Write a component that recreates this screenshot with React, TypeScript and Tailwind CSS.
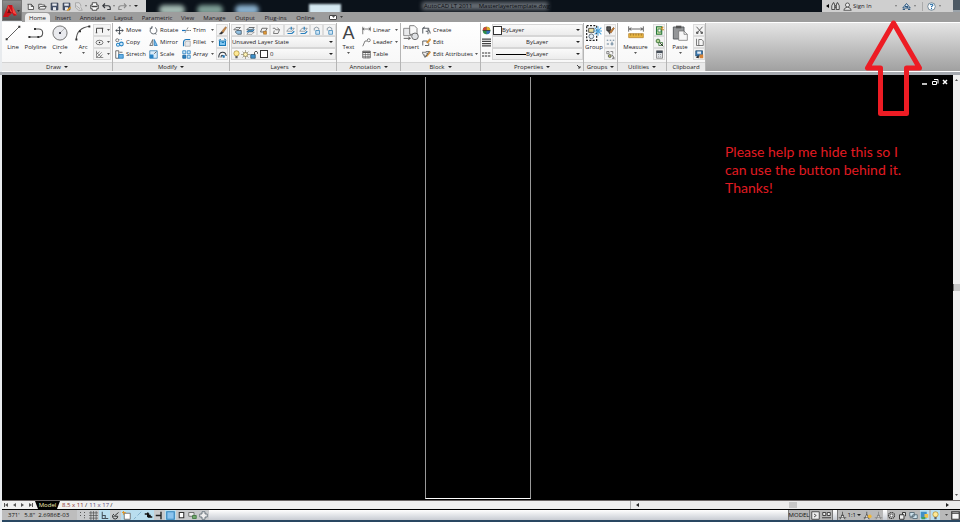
import type { ReactNode } from "react"

const icons: Record<string, ReactNode> = {
  // quick access toolbar
  new: <path d="M2 3h5l3 3v4H3V3M7 3v3h3" fill="#f4f4f4" stroke="#333" />,
  open: <path d="M1 9V3h4l1 1h3v2M1 9l2-3h8L9 9.5H1" fill="#eee" stroke="#333" />,
  save: <><path d="M1.5 1.5h9v9h-9z" fill="#46526b" stroke="#29344a" /><path d="M3 2h6v3H3zM4 7h4v4H4z" fill="#e8eaf0" /></>,
  saveAs: <><path d="M1.5 1.5h9v9h-9z" fill="#46526b" stroke="#29344a" /><path d="M3 2h6v3H3zM4 7h4v4H4z" fill="#e8eaf0" /><path d="M6 11l5-5 1 2-4 4z" fill="#e39c28" /></>,
  sheet: <path d="M2 1h5l2 3v2M2 1v6l4 4h5L9 7M3 5l5 4" fill="#ddd" stroke="#999" />,
  print: <><path d="M3 1h6v3h2v5H9v2H3V9H1V4h2z" fill="#fff" stroke="#222" /><path d="M2 5h8v2H2z" fill="#444" /></>,
  undo: <path d="M4 2L1 5l3 3M1 5h7q3 0 3 3v2H7" fill="none" stroke="#35383d" strokeWidth="1.5" />,
  redo: <path d="M8 2l3 3-3 3M11 5H4Q1 5 1 8v2h4" fill="none" stroke="#8b8b8b" strokeWidth="1.5" />,
  // draw
  line: <><path d="M1.5 10.5l9-9" stroke="#555" strokeWidth=".7" /><path d="M.5 10h1.5v1.5H.5zM10 .5h1.5V2H10z" fill="#333" /></>,
  polyline: <><path d="M1 9h7c4 0 4-6 0-6H5" fill="none" stroke="#555" strokeWidth=".8" /><path d="M.3 8.2h1.5v1.5H.3zM7 8.2h1.5v1.5H7zM4.5 2.2H6v1.5H4.5z" fill="#333" /></>,
  circle: <><circle cx="6" cy="6" r="5.3" fill="#e9eaee" stroke="#555" strokeWidth=".6" /><path d="M6 6l4-4" stroke="#999" strokeWidth=".5" /><circle cx="6" cy="6" r=".8" fill="#223" /></>,
  arc: <><path d="M1 11c0-5 3-9 10-10" fill="none" stroke="#555" strokeWidth=".8" /><path d="M.3 10.2h1.5v1.5H.3zM10 .3h1.5v1.5H10zM3 4h1.5v1.5H3z" fill="#333" /></>,
  rect: <path d="M2 9V3h8v6M1 9h2M9 3h2" fill="none" stroke="#444" strokeWidth="1.3" />,
  ellipse: <><ellipse cx="6" cy="6" rx="4.7" ry="3" fill="#f4f4f4" stroke="#555" /><circle cx="6" cy="6" r="1" fill="#222" /></>,
  hatch: <path d="M2 1v9h9M2 10l7-7M2 6l4-4M6 10l4-4M2 3l7 7" fill="none" stroke="#555" strokeWidth=".8" />,
  // modify
  move: <path d="M6 1v10M1 6h10M4.5 3L6 1l1.500 2M4.500 9L6 11l1.500-2M3 4.500L1 6l2 1.500M9 4.500L11 6 9 7.500" fill="none" stroke="#424951" strokeWidth="1.2" />,
  rotate: <path d="M8 2a4.500 4.500 0 1 1-4 0M4 0v3H1M8 10l2 1" fill="none" stroke="#555c64" strokeWidth="1.2" />,
  trim: <><path d="M0 6h5" stroke="#1b74bf" strokeWidth="1.6" /><path d="M4 9l4-7M7 6h5" stroke="#444" strokeDasharray="2 1" /></>,
  copy: <><circle cx="3" cy="3" r="2" fill="none" stroke="#555" /><circle cx="4" cy="9" r="2" fill="none" stroke="#2583c4" strokeWidth="1.4" /><circle cx="8.500" cy="8" r="2.500" fill="#d2e9fa" stroke="#2583c4" strokeWidth="1.4" /><path d="M6 2h4" stroke="#2583c4" strokeDasharray="1 1" /></>,
  mirror: <><path d="M5 2v8H1z" fill="#eee" stroke="#555" /><path d="M7 2v8h4z" fill="#7fc0ee" stroke="#1f77b8" /></>,
  fillet: <><path d="M2 11V6q0-4 4-4h5" fill="none" stroke="#1f77b8" strokeWidth="1.5" /><path d="M4 11V7q0-3 3-3h4v7z" fill="#e6e8eb" stroke="#777" strokeWidth=".6" /></>,
  stretch: <><path d="M1 1h4v10H1z" fill="#fff" stroke="#444" /><path d="M5 6h6v5H5z" fill="#67b1e6" stroke="#1f77b8" /><path d="M6 3h4" stroke="#444" /></>,
  scale: <><path d="M1 1h10v10H1z" fill="#d9ecf9" stroke="#2c7ab1" /><path d="M1 6h5v5H1z" fill="#2984c6" /><path d="M7 5l3-3" stroke="#444" /></>,
  array: <><path d="M1 1h4v4H1zM7 1h4v4H7zM7 7h4v4H7z" fill="#cfe7f8" stroke="#1f7bc0" /><path d="M1 7h4v4H1z" fill="#2984c6" stroke="#155a91" /></>,
  erase: <><path d="M5 7l5-6 1.500 1L7 9z" fill="#c98944" stroke="#80502a" strokeWidth=".6" /><path d="M1 11l4-4 2 2-2 2z" fill="#333" /></>,
  explode: <><path d="M2 4h8v6H2z" fill="#85c8f1" stroke="#177ab9" strokeWidth="1.4" /><path d="M1 3l3-1M8 1l3 2M5 6h3" stroke="#177ab9" strokeWidth="1.300" /></>,
  offset: <><path d="M1 10C1 1 10 1 11 8M4 10c0-4 3-4 4 0" fill="none" stroke="#30363c" strokeWidth="1.4" /><path d="M6 7h3v3H6z" fill="#1f7bc0" /></>,
  // layers
  layerProps: <><path d="M1 5l3-3h6L7 5z" fill="#e7edf2" stroke="#555" /><path d="M3 8l2-2h6v5H6z" fill="#91bfe0" stroke="#3c4d5b" /></>,
  layerBlue: <><path d="M1 8l3-3h7L8 8z" fill="#59a7dd" stroke="#195e93" /><path d="M1 5l3-3h7L8 5z" fill="#d5ebf8" stroke="#444" /><path d="M1 11l3-3h7l-3 3z" fill="#fff" stroke="#555" strokeWidth=".7" /></>,
  layerGold: <><path d="M2 8l2-5h7L8 8z" fill="#eee" stroke="#444" /><path d="M6 7h4v4H6z" fill="#df9735" stroke="#855014" strokeWidth=".6" /></>,
  layerGray: <path d="M1 3h3l1 2h5M3 6l-1 4h6l2-5M7 2l3 3" fill="#f2f2f2" stroke="#555" />,
  layerOff: <><path d="M1 7l3-4h7L8 7z" fill="#eef2f4" stroke="#66717b" strokeWidth=".8" /><path d="M2 10h6l3-3M7 1v4" stroke="#287fbd" strokeWidth="1.600" fill="none" /></>,
  lockBlue: <><path d="M3 6V3q3-3 6 0v2" fill="none" stroke="#697987" /><path d="M5 6h5v5H5z" fill="#cfe5f5" stroke="#3584b8" /></>,
  bulb: <><circle cx="6" cy="4.500" r="3.500" fill="#ffe995" stroke="#9a7c20" strokeWidth=".8" /><path d="M4.500 8h3v3h-3z" fill="#606060" /></>,
  sun: <><path d="M6 0v12M0 6h12M2 2l8 8M10 2l-8 8" stroke="#7c765a" strokeWidth=".8" /><circle cx="6" cy="6" r="2.700" fill="#fff4b5" stroke="#88784b" /></>,
  unlock: <><path d="M1 6h6v5H1z" fill="#3d90cb" stroke="#29536f" /><path d="M6 6V3q2-3 4 0v2" fill="none" stroke="#444" strokeWidth="1.2" /></>,
  // annotation and block
  linear: <path d="M1 1v10M11 1v6M1 4h10M3 2.500L1 4l2 1.500M9 2.500L11 4 9 5.500" fill="none" stroke="#555" />,
  leader: <><path d="M1 11l3-7h3" fill="none" stroke="#555" /><circle cx="9" cy="3" r="2" fill="#fff" stroke="#555" /></>,
  table: <><path d="M1 1.500h10v9H1z" fill="#fff" stroke="#444" /><path d="M1 2h10v2H1z" fill="#555" /><path d="M1 6h10M1 8.500h10M4.500 3v8M8 3v8" stroke="#555" strokeWidth=".8" /></>,
  insert: <><path d="M.5 2.500h5.500v5.500H.5z" fill="#e9eaec" stroke="#777" strokeWidth=".6" /><path d="M5 .5h3.500l2 2V7H5z" fill="#f9f9f9" stroke="#666" strokeWidth=".6" /><circle cx="9" cy="8.500" r="2.500" fill="#dfe1e4" stroke="#666" strokeWidth=".7" /><path d="M.5 10h5M4 9l1.500 1L4 11" fill="none" stroke="#555" strokeWidth=".7" /></>,
  create: <path d="M1 10V3h8v3M1 3l3-2M5 7h3v4M7 5q4 0 4 5" fill="none" stroke="#454b51" strokeWidth="1.2" />,
  edit: <><path d="M1 10V4h6v2M4 10h5V7" fill="none" stroke="#555" strokeWidth="1.2" /><path d="M6 6l4-5 2 1-4 5z" fill="#e9a138" stroke="#a56113" strokeWidth=".5" /></>,
  attributes: <><path d="M0 3h5l3 3-4 4zM5 2h6" fill="#eee" stroke="#555" /><path d="M5 8l5-6 2 1-5 6z" fill="#da973e" /><path d="M3 6l2 3 4-7" fill="none" stroke="#414850" /></>,
  // properties
  wheel: <><circle cx="6" cy="6" r="5" fill="#2f8e4a" /><path d="M6 6V1a5 5 0 0 1 5 5z" fill="#e3ad29" /><path d="M6 6h5a5 5 0 0 1-5 5z" fill="#356ebb" /><path d="M6 6H1a5 5 0 0 1 5-5z" fill="#d24735" /><path d="M1 6h10" stroke="#333" /></>,
  weights: <path d="M0 1.500h12M0 4.500h12M0 7.500h12M0 10.500h12" stroke="#444" strokeWidth="1.6" />,
  types: <path d="M0 4h12M0 8h12" stroke="#333" strokeWidth="1.400" strokeDasharray="3 1" />,
  group: <><path d="M.5 .5h7.500v11H.5z" fill="none" stroke="#222" strokeWidth=".9" strokeDasharray="1.500 1" /><path d="M2 2.500h4v3H2z" fill="#e9dda0" stroke="#333" strokeWidth=".6" /><circle cx="4" cy="8.500" r="1.800" fill="#e5edf3" stroke="#456" strokeWidth=".6" /><path d="M9 1v7M5.500 4.500h6.500M6.500 2l5 5M11.500 2l-5 5" stroke="#4da4dc" strokeWidth=".8" /></>,
  ungroup: <><path d="M1 1h5v5H1zM2 7h3v4" fill="#555" stroke="#222" /><path d="M5 8l5-6 1 1-4 6z" fill="#d59035" stroke="#8c4f22" /></>,
  groupEdit: <path d="M1 3h2M5 3h2M9 3h2M1 8h3M6 8h4M8 5v5" stroke="#647f96" strokeWidth="1.3" />,
  groupPick: <><path d="M1 2h3v3H1zM6 2h3v3" fill="none" stroke="#666" /><circle cx="5" cy="8" r="2" fill="#b3ba68" stroke="#555" /><path d="M8 6l3 5M8 11h3" stroke="#444" /></>,
  measure: <><path d="M.5 1v4M11.500 1v4M1 3h10M2.500 2L1 3l1.500 1M9.500 2L11 3 9.500 4" fill="none" stroke="#444" strokeWidth=".6" /><path d="M.5 6.500h11v3H.5z" fill="#e8b644" stroke="#ad791e" strokeWidth=".5" /><path d="M2 6.500v1.500M4 6.500v1.500M6 6.500v1.500M8 6.500v1.500M10 6.500v1.500" stroke="#745018" strokeWidth=".4" /></>,
  quickSelect: <><path d="M2 1h7v10H2z" fill="#c4dc9e" stroke="#24763b" strokeWidth="1.400" /><path d="M4 4h4v4H4z" fill="#fff" stroke="#27753b" /><path d="M8 4l3-3M9 5h3" stroke="#d58b20" strokeWidth="1.500" /></>,
  quickCalc: <><circle cx="4" cy="4" r="2.500" fill="#b2d391" stroke="#386f34" strokeWidth="1.2" /><path d="M5 6h5v4H5z" fill="#eaf0e5" stroke="#356d34" /><path d="M7 7l4 4" stroke="#222" strokeWidth="1.300" /></>,
  calc: <><path d="M2 1h8v10H2z" fill="#dfe2e6" stroke="#777" /><path d="M2 1h8v3H2z" fill="#454f59" /><path d="M4 6h1M7 6h1M4 9h1M7 9h1" stroke="#777" /></>,
  paste: <><path d="M1 1.500h8v9H1z" fill="#949698" stroke="#55585c" strokeWidth=".7" /><path d="M3 .5h4v2H3z" fill="#555" /><path d="M5 4.500h4l2.500 2.500v4.500H5z" fill="#f7f7f7" stroke="#666" strokeWidth=".5" /><path d="M9 4.500V7h2.500" fill="none" stroke="#666" strokeWidth=".5" /></>,
  cut: <path d="M2 1l7 8M10 1L3 9M2 8h2v2H2zM8 8h2v2H8z" fill="none" stroke="#555" strokeWidth="1.200" />,
  clip: <path d="M2 1v9h4M5 2h4l2 2v6H5z" fill="#f5f5f5" stroke="#555" />,
  match: <><path d="M1 1h9v7H1z" fill="#3c7cb5" stroke="#274e6d" /><path d="M3 2h5v3H3z" fill="#e8eef4" /><path d="M6 6h5v5H6z" fill="#d58235" /><path d="M1 10l4-3v4z" fill="#222" /></>,
  // info center
  binoculars: <path d="M3 1h1l1 4v5H1V5zM8 1h1l2 4v5H7V5zM5 5h2M5 7h2" fill="#ddd" stroke="#222" />,
  person: <><circle cx="6" cy="4" r="2.700" fill="#eee" stroke="#333" /><path d="M1 11q1-4 5-4t5 4z" fill="#e9e9e9" stroke="#333" /></>,
  exchange: <><path d="M1 8l5-6 5 6z" fill="#dce8f4" stroke="#29547c" strokeWidth="1.300" /><path d="M1 10h3M8 10h3M4 6h4M4 5l4 3" stroke="#29547c" strokeWidth="1.300" /></>,
  help: <><circle cx="6" cy="6" r="5" fill="#fff" stroke="#526d83" /><path d="M4 4q2-2 4 0 0 1-2 2v1M6 8v1.500" fill="none" stroke="#2269a4" strokeWidth="1.400" /></>,
  // status bar
  snap: <path d="M3 2h1M8 2h1M3 6h1M8 6h1M8 9h1" stroke="#333" strokeWidth="1.500" />,
  grid: <path d="M0 2.500h12M0 6h12M0 9.500h12M2.500 0v12M6 0v12M9.500 0v12" stroke="#444" strokeWidth=".8" />,
  ortho: <path d="M3 1v9h8M3 6h4v4" fill="none" stroke="#45515b" strokeWidth="1.400" />,
  polar: <path d="M3 8l7-6M4 4a3.500 3.500 0 1 0 5 3M5 7h4" fill="none" stroke="#333" strokeWidth="1.300" />,
  osnap: <><path d="M3 3h8v8H3z" fill="#fff" stroke="#555" /><path d="M0 2h5M2 0v5" stroke="#df9a30" strokeWidth="1.400" /></>,
  otrack: <path d="M1 11l3-3M6 6l5-5" stroke="#76a6c3" />,
  ducs: <path d="M1 4h5v4h5M4 6h5M5 2v6" fill="none" stroke="#111" strokeWidth="2" />,
  dyn: <path d="M1 6h7M8 1v10" stroke="#222" strokeWidth="1.800" />,
  weight: <path d="M1 1h10v10H1z" fill="#8bc4ef" stroke="#3284bd" strokeWidth="1.500" />,
  paper: <path d="M3 2h6v7H3z" fill="#fff" stroke="#333" strokeWidth="1.400" />,
  props: <><path d="M1 2h7v5H1z" fill="#eee" stroke="#555" /><path d="M6 6h5v4H6z" fill="#72a86d" stroke="#366f35" /></>,
  cycle: <path d="M4 1h4v3h3v4H8v3H4V8H1V4h3z" fill="#eee" stroke="#53606b" />,
  model: <path d="M1 1h10v10H1zM4 4l3 2-3 2" fill="#eee" stroke="#444" strokeWidth="1.200" />,
  views: <path d="M1 2h4v4H1zM7 2h4v4H7zM0 9h12" fill="#eee" stroke="#333" strokeWidth="1.200" />,
  scaleMan: <path d="M6 1v3M3 11l3-7 3 7M1 9h10M4 6h4" fill="#eee" stroke="#444" />,
  scaleGold: <><path d="M5 1v3M2 11l3-7 3 7M1 9h8" fill="#eee" stroke="#444" /><circle cx="9" cy="7" r="2.500" fill="#f2b735" /></>,
  gear: <><circle cx="6" cy="6" r="4" fill="#ddd" stroke="#333" strokeWidth="1.500" strokeDasharray="2 .7" /><circle cx="6" cy="6" r="2" fill="#fff" stroke="#333" /></>,
  lock: <path d="M2 5h6v6H2zM6 5V2h4v5" fill="#eee" stroke="#333" strokeWidth="1.300" />,
  hardware: <path d="M1 2h6v5H1zM5 5h6v5H5zM1 9h3" fill="#cfe3ed" stroke="#465b69" />,
  isolate: <><path d="M1 1h8v9H1z" fill="#3f8fc5" /><path d="M6 4h5v5H6z" fill="#f2c449" /><path d="M2 8h5v3H2z" fill="#40a060" /></>,
  clean: <path d="M1 1h10v10H1zM1 3h10" fill="#f7f7f7" stroke="#333" strokeWidth="1.500" />,
}

function Icon({ name, className = "size-[9px]" }: { name: string; className?: string }) {
  return (
    <svg viewBox="0 0 12 12" className={`shrink-0 ${className}`} aria-hidden="true">
      {icons[name]}
    </svg>
  )
}

function Caret({ className = "w-[3px]" }: { className?: string }) {
  return (
    <svg viewBox="0 0 4 2" className={`h-[2px] shrink-0 ${className}`} aria-hidden="true">
      <path d="M0 0h4L2 2z" fill="#222" />
    </svg>
  )
}

function Panel({ title, className, caret = true, launcher = false, children }: { title: string; className: string; caret?: boolean; launcher?: boolean; children: ReactNode }) {
  return (
    <section className={`shrink-0 flex flex-col border-r border-[#b5b5b5] ${className}`}>
      <div className="h-[39px] flex pt-px bg-gradient-to-b from-white to-[#f8f8f8]">{children}</div>
      <h2 className="relative h-[9px] flex items-center justify-center gap-[3px] bg-[#eaeaea] border-t border-[#d4d4d4] text-[#222]">
        {title}
        {caret && <Caret className="w-[4px]" />}
        {launcher && (
          <svg viewBox="0 0 4 4" className="absolute right-[2px] size-[4px]" aria-hidden="true">
            <path d="M0 0l3 3M3 1v2H1" fill="none" stroke="#444" />
          </svg>
        )}
      </h2>
    </section>
  )
}

function BigTool({ icon, label, caret, className }: { icon: string; label: string; caret?: boolean; className: string }) {
  return (
    <button className={`shrink-0 flex flex-col items-center ${className}`}>
      {icon === "text" ? (
        <span className="h-[18px] font-['Liberation_Sans',sans-serif] text-[18px] leading-[18px] text-[#3f4347]">A</span>
      ) : (
        <span className="h-[18px] flex items-center"><Icon name={icon} className="size-[16px]" /></span>
      )}
      <span className="mt-px leading-[8px]">{label}</span>
      {caret && <Caret className="mt-px w-[3px]" />}
    </button>
  )
}

function Tools({ items, className }: { items: [string, string, boolean?][]; className: string }) {
  return (
    <div className={`shrink-0 flex flex-col ${className}`}>
      {items.map(([icon, label, caret]) => (
        <button key={label} className="h-3 flex items-center gap-[2px] whitespace-nowrap">
          <Icon name={icon} />
          {label}
          {caret && <Caret className="ml-auto mr-px w-[3px]" />}
        </button>
      ))}
    </div>
  )
}

function IconStack({ items, caret, className }: { items: string[]; caret?: boolean; className: string }) {
  return (
    <div className={`shrink-0 flex flex-col ${className}`}>
      {items.map((icon) => (
        <button key={icon} aria-label={icon} className="h-3 flex items-center justify-center gap-[3px] bg-[#f4f4f4] border border-[#dcdcdc]">
          <Icon name={icon} />
          {caret && <Caret />}
        </button>
      ))}
    </div>
  )
}

function Dropdown({ label, value, className = "", children }: { label: string; value: string; className?: string; children?: ReactNode }) {
  return (
    <label className="h-3 min-w-0 flex-1 flex items-center pr-[2px] bg-gradient-to-b from-[#fafafa] to-[#ececec] border border-[#d6d6d6]">
      {children}
      <select aria-label={label} className={`min-w-0 flex-1 h-[10px] appearance-none outline-none leading-[10px] ${className}`}>
        <option>{value}</option>
      </select>
      <Caret className="w-[4px]" />
    </label>
  )
}

const quickAccess = ["new", "open", "save", "saveAs", "sheet", "print", "undo", "redo"]
const ribbonTabs = [
  ["Home", "w-[25px]"],
  ["Insert", "w-[26px]"],
  ["Annotate", "w-[33px]"],
  ["Layout", "w-[29px]"],
  ["Parametric", "w-[38px]"],
  ["View", "w-[23px]"],
  ["Manage", "w-[31px]"],
  ["Output", "w-[30px]"],
  ["Plug-ins", "w-[31px]"],
  ["Online", "w-[29px]"],
]
const layerTools = ["layerProps", "layerBlue", "layerGold", "layerGray", "layerOff", "layerOff", "lockBlue", "lockBlue"]
const toggles: [string, boolean][] = [
  ["snap", false], ["grid", false], ["ortho", true], ["polar", false], ["osnap", true], ["otrack", true],
  ["ducs", true], ["dyn", false], ["weight", true], ["paper", false], ["props", false], ["cycle", false],
]

function TitleBar() {
  return (
    <div className="h-3 flex bg-[#0b121a]">
      <div className="w-[124px] shrink-0 flex items-center pl-1 gap-[3px] bg-[#d3d3d3]">
        {quickAccess.map((name) => (
          <button key={name} aria-label={name} className="flex items-center gap-[2px]">
            <Icon name={name} />
            {["sheet", "undo", "redo"].includes(name) && <Caret className="w-[2px]" />}
          </button>
        ))}
        <Caret className="w-[4px]" />
      </div>
      <div className="relative flex-1 min-w-0 overflow-hidden">
        <div className="absolute left-[13px] top-[5px] w-[26px] h-[10px] rounded-full bg-[#a2b8b1] blur-[2px]" />
        <div className="absolute left-[51px] top-[5px] w-[26px] h-[10px] rounded-full bg-[#7d9d95] blur-[2px]" />
        <div className="absolute left-[89px] top-[5px] w-[24px] h-[10px] rounded-full bg-[#88aecb] blur-[2px]" />
        <div className="absolute left-[163px] top-[4px] w-[32px] h-[12px] bg-[#d5e8f1] blur-[1px]" />
        <div className="absolute left-[276px] top-[2px] w-[126px] h-[8px] bg-[#666c73] blur-[2px]" />
        <span className="absolute left-[278px] top-[2px] text-[#080b0f] whitespace-pre">AutoCAD LT 2011    Masterlayertemplate.dwg</span>
      </div>
      <div className="w-[131px] shrink-0 flex items-center bg-[#cfcfcf] pl-1">
        <button aria-label="Collapse" className="w-[5px]">
          <svg viewBox="0 0 3 4" className="w-[3px] h-[4px]" aria-hidden="true"><path d="M3 0v4L0 2z" /></svg>
        </button>
        <button aria-label="Search" className="w-3 flex"><Icon name="binoculars" /></button>
        <button className="w-[54px] flex items-center gap-px"><Icon name="person" />Sign In<Caret className="ml-auto w-[2px]" /></button>
        <button className="w-[20px] ml-[5px] flex items-center gap-[3px]" aria-label="Exchange"><Icon name="exchange" /><Caret className="w-[2px]" /></button>
        <button className="h-[9px] pl-1 flex items-center gap-[3px] border-l border-[#aaa]" aria-label="Help"><Icon name="help" /><Caret className="w-[2px]" /></button>
      </div>
      <div className="w-[7px] shrink-0 bg-[#4d5964] border-b-2 border-[#9ba3aa]" />
    </div>
  )
}

function Ribbon() {
  return (
    <div className="shrink-0 h-[50px] ml-[2px] flex border-y border-white bg-gradient-to-b from-[#e5e5e5] to-[#a0a0a0]">
      <Panel title="Draw" className="w-[111px]">
        <BigTool icon="line" label="Line" className="w-[22px]" />
        <BigTool icon="polyline" label="Polyline" className="w-[23px]" />
        <BigTool icon="circle" label="Circle" caret className="w-[26px]" />
        <BigTool icon="arc" label="Arc" caret className="w-[20px]" />
        <IconStack items={["rect", "ellipse", "hatch"]} caret className="w-[18px]" />
      </Panel>
      <Panel title="Modify" className="w-[117px]">
        <Tools className="w-[34px] ml-[2px]" items={[["move", "Move"], ["copy", "Copy"], ["stretch", "Stretch"]]} />
        <Tools className="w-[33px]" items={[["rotate", "Rotate"], ["mirror", "Mirror"], ["scale", "Scale"]]} />
        <Tools className="w-[33px]" items={[["trim", "Trim", true], ["fillet", "Fillet", true], ["array", "Array", true]]} />
        <IconStack items={["erase", "explode", "offset"]} className="w-3 ml-px" />
      </Panel>
      <Panel title="Layers" className="w-[107px]">
        <div className="flex-1 min-w-0 flex flex-col pl-px">
          <div className="h-3 flex">
            {layerTools.map((name, index) => (
              <button key={index} aria-label={name} className="flex-1 flex items-center justify-center bg-[#f4f4f4] border border-[#dcdcdc]"><Icon name={name} /></button>
            ))}
          </div>
          <div className="h-3 flex"><Dropdown label="Layer state" value="Unsaved Layer State" /></div>
          <div className="h-3 flex">
            <Dropdown label="Layer" value="0" className="pl-[2px]">
              <Icon name="bulb" /><Icon name="sun" /><Icon name="unlock" />
              <span className="ml-px size-[8px] bg-white border border-[#333]" />
            </Dropdown>
          </div>
        </div>
      </Panel>
      <Panel title="Annotation" className="w-[64px]">
        <BigTool icon="text" label="Text" caret className="w-[23px]" />
        <Tools className="w-[37px] ml-[2px]" items={[["linear", "Linear", true], ["leader", "Leader", true], ["table", "Table"]]} />
      </Panel>
      <Panel title="Block" className="w-[80px]">
        <BigTool icon="insert" label="Insert" className="w-[20px]" />
        <Tools className="w-[57px] ml-px" items={[["create", "Create"], ["edit", "Edit"], ["attributes", "Edit Attributes", true]]} />
      </Panel>
      <Panel title="Properties" launcher className="w-[103px]">
        <div className="flex-1 flex flex-col pl-px">
          <div className="flex items-center gap-px"><Icon name="wheel" />
            <Dropdown label="Object color" value="ByLayer"><span className="size-[9px] bg-white border border-[#333]" /></Dropdown>
          </div>
          <div className="flex items-center gap-px"><Icon name="weights" /><Dropdown label="Lineweight" value="ByLayer" className="pl-[33px]" /></div>
          <div className="flex items-center gap-px"><Icon name="types" />
            <Dropdown label="Linetype" value="ByLayer"><span className="ml-[3px] w-[30px] h-px bg-black" /></Dropdown>
          </div>
        </div>
      </Panel>
      <Panel title="Groups" className="w-[34px]">
        <BigTool icon="group" label="Group" className="w-[20px]" />
        <IconStack items={["ungroup", "groupEdit", "groupPick"]} className="w-3" />
      </Panel>
      <Panel title="Utilities" className="w-[49px]">
        <BigTool icon="measure" label="Measure" caret className="w-[35px]" />
        <IconStack items={["quickSelect", "quickCalc", "calc"]} className="w-3" />
      </Panel>
      <Panel title="Clipboard" caret={false} className="w-[39px]">
        <BigTool icon="paste" label="Paste" caret className="w-[26px]" />
        <IconStack items={["cut", "clip", "match"]} className="w-3" />
      </Panel>
    </div>
  )
}

function StatusBar() {
  return (
    <footer className="shrink-0 h-3 ml-[2px] flex items-center border-b-2 border-[#294762] bg-gradient-to-b from-white to-[#c8ccd3] text-[#111]">
      <div className="w-[75px] h-full pl-[6px] flex items-center bg-[#bdbdbd] whitespace-pre">371'   5.8"  2.6986E-03</div>
      {toggles.map(([name, on]) => (
        <button key={name} aria-label={name} aria-pressed={on} className={`w-[11px] h-full flex items-center justify-center ${on ? "bg-[#b9deef]" : "bg-[#c8cacc]"}`}>
          <Icon name={name} />
        </button>
      ))}
      <div className="ml-auto h-full flex items-center bg-[#b5b5b5] border-x border-[#777]">
        <button className="w-[21px] h-full border-r border-[#777]">MODEL</button>
        <button aria-label="Layout view" className="w-[11px] flex justify-center"><Icon name="model" /></button>
        <button aria-label="Quick views" className="w-[11px] flex justify-center"><Icon name="views" /></button>
      </div>
      <div className="ml-[4px] h-full flex items-center gap-[2px] bg-[#b9b9b9] border-l border-[#777]">
        <button className="flex items-center gap-px"><Icon name="scaleMan" />1:1<Caret className="w-[4px]" /></button>
        <button aria-label="Annotation visibility"><Icon name="scaleGold" /></button>
        <button aria-label="Auto scale" className="opacity-50"><Icon name="scaleMan" /></button>
      </div>
      <div className="ml-[4px] h-full flex items-center gap-[2px] bg-[#b9b9b9]">
        {["gear", "lock", "hardware", "isolate", "bulb"].map((name) => (
          <button key={name} aria-label={name} className={`h-full ${name === "isolate" || name === "bulb" ? "bg-[#b9deef]" : ""}`}><Icon name={name} /></button>
        ))}
        <Caret className="ml-[3px] mr-px w-[3px]" />
        <button aria-label="Clean screen"><Icon name="clean" /></button>
      </div>
    </footer>
  )
}

export default function App() {
  return (
    <div className="relative h-screen min-h-64 flex flex-col overflow-hidden bg-[#e8ebee] font-['Open_Sans',sans-serif] text-[6px] leading-[8px] text-[#1d1a24]">
      <header className="shrink-0 flex">
        <button aria-label="Application menu" className="w-[20px] h-[21px] ml-[2px] shrink-0 flex items-center justify-between pr-px bg-gradient-to-b from-[#8c8c8c] to-[#555] border border-[#777]">
          <svg viewBox="0 0 14 14" className="size-[14px]" aria-hidden="true">
            <path d="M0 13L5 1h4l5 10-3 1-2-3-4 4z" fill="#c91119" />
            <path d="M5 1l4 7-5 1zM9 1l5 10-4-2z" fill="#f34a42" />
            <path d="M6 4l2 5H4z" fill="#74070d" />
          </svg>
          <Caret />
        </button>
        <div className="flex-1 min-w-0">
          <TitleBar />
          <nav className="h-[10px] pl-[3px] flex items-center bg-[#9d9d9d]">
            {ribbonTabs.map(([name, width], index) => (
              <button key={name} className={`h-[9px] mt-px text-center ${width} ${index === 0 ? "bg-[#eeeeee] rounded-t-sm" : ""}`}>
                {name}
              </button>
            ))}
            <button aria-label="Minimize ribbon" className="ml-[9px] flex items-center gap-[3px]">
              <span className="w-[8px] h-[5px] flex items-center justify-center rounded-[1px] bg-white border border-[#444]"><Caret /></span>
              <Caret />
            </button>
          </nav>
        </div>
      </header>
      <Ribbon />
      <div className="shrink-0 h-[3px] bg-[#a6aab0]" />

      <main className="flex-1 min-h-0 flex ml-[2px]">
        <div className="relative flex-1 bg-black">
          {/* model geometry */}
          <div className="absolute left-[423px] top-[2px] bottom-px w-[106px] border-x border-b border-x-[#999] border-b-white" />
          <div className="absolute right-[4px] top-[3px] flex gap-[2px] text-white">
            <button aria-label="Minimize"><svg viewBox="0 0 8 8" className="size-[8px]"><path d="M1 6h5" stroke="currentColor" strokeWidth="1.500" /></svg></button>
            <button aria-label="Restore"><svg viewBox="0 0 8 8" className="size-[8px]"><path d="M1.500 3.500h4v3h-4zM3 1.500h4v4" fill="none" stroke="currentColor" /></svg></button>
            <button aria-label="Close"><svg viewBox="0 0 8 8" className="size-[8px]"><path d="M2 2l4 4M6 2L2 6" stroke="currentColor" strokeWidth="1.500" /></svg></button>
          </div>
          <p className="absolute right-[43px] top-[68px] w-[185px] font-['Lato',sans-serif] text-[14px] leading-[18px] text-[#e21b22] [font-variant-ligatures:none]">
            Please help me hide this so I<br />can use the button behind it.<br />Thanks!
          </p>
        </div>
        <div className="w-[7px] shrink-0 flex flex-col items-center justify-between py-[4px] bg-[#f0f0f0]">
          <Caret className="rotate-180 w-[3px]" />
          <span className="w-full h-[7px] bg-[#c9c9c9] border-l border-[#777]" />
          <Caret />
        </div>
      </main>

      <div className="shrink-0 h-[10px] ml-[2px] flex items-center bg-[#f0f0f0] border-t border-b border-t-[#6b6666] border-b-black">
        <div className="w-[33px] shrink-0 flex items-center justify-around text-[#555]">
          {["First", "Previous", "Next", "Last"].map((name, index) => (
            <button key={name} aria-label={name}>
              <svg viewBox="0 0 5 6" className={`w-[5px] h-[6px] ${index > 1 ? "rotate-180" : ""}`} aria-hidden="true">
                <path d="M4 1v4L1 3z" fill="currentColor" />
                {(index === 0 || index === 3) && <path d="M.5 1v4" stroke="currentColor" />}
              </svg>
            </button>
          ))}
        </div>
        <button className="w-[25px] h-[8px] bg-black text-[#f5ecb4] [clip-path:polygon(0_0,100%_0,88%_100%,12%_100%)]">Model</button>
        <button className="ml-[2px] w-[23px] text-left text-[#8a2f2a]">8.5 x 11</button>
        <span>/</span>
        <button className="ml-[2px] text-[#5a4a78]">11 x 17</button>
        <span className="ml-px">/</span>
        <div className="ml-auto w-[330px] max-w-1/2 h-full flex items-center border-l border-[#aaa] bg-[#ececec]">
          <svg viewBox="0 0 3 4" className="ml-[5px] w-[3px] h-[4px]" aria-hidden="true"><path d="M3 0v4L0 2z" fill="#222" /></svg>
          <span className="ml-[150px] w-[8px] h-[6px] bg-[#c7c7c7]" />
          <svg viewBox="0 0 3 4" className="ml-auto mr-[11px] w-[3px] h-[4px]" aria-hidden="true"><path d="M0 0v4l3-2z" fill="#222" /></svg>
        </div>
      </div>
      <StatusBar />

      <svg viewBox="0 0 60 98" className="absolute right-[36px] top-[19px] w-[60px] h-[98px] pointer-events-none" aria-hidden="true">
        <path d="M29.500 4L3.500 49h13v45.500h26V49h13z" fill="none" stroke="#ed1c24" strokeWidth="5" strokeLinejoin="round" />
      </svg>
    </div>
  )
}
